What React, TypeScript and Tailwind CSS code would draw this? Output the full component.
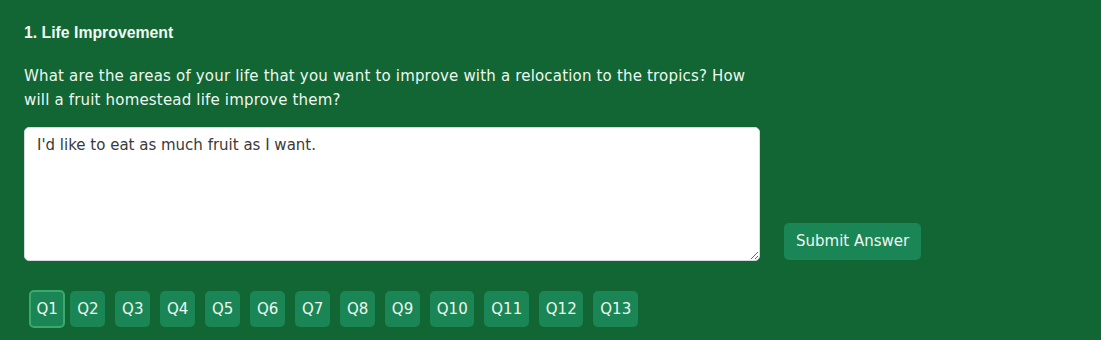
import React from "react";

const font = { fontFamily: '"DejaVu Sans", "Liberation Sans", sans-serif' };

const questions = ["Q1", "Q2", "Q3", "Q4", "Q5", "Q6", "Q7", "Q8", "Q9", "Q10", "Q11", "Q12", "Q13"];

export default function App() {
  return (
    <div
      className="h-[340px] w-full bg-[#116633] px-6 pt-[23px] text-[#f1f8f3]"
      style={font}
    >
      <h3
        className="text-[15.8px] font-bold leading-5"
        style={{ fontFamily: '"Liberation Sans", Arial, sans-serif' }}
      >
        1. Life Improvement
      </h3>
      <p className="mt-[21px] w-[728px] text-[15px] leading-6 tracking-[0.18px] text-[#eef7f1]">
        What are the areas of your life that you want to improve with a relocation to the tropics? How will a
        fruit homestead life improve them?
      </p>
      <div className="mt-[15px] flex items-end gap-6">
        <textarea
          className="h-[134px] w-[736px] resize-y rounded-[5px] border border-[#d5d9de] bg-white px-3 py-[7px] text-[15px] leading-5 text-[#3a3a3a] outline-none"
          style={font}
          defaultValue="I'd like to eat as much fruit as I want."
        />
        <button className="mb-px h-[37px] rounded-[5px] bg-[#1b8655] px-3 text-[15px] text-[#eef7f1]">
          Submit Answer
        </button>
      </div>
      <div className="mt-[29px] flex items-center">
        {questions.map((q, i) => (
          <button
            key={q}
            className={
              i === 0
                ? "ml-[5px] flex h-[38px] items-center rounded-[5px] border-2 border-[#3aa96b] bg-[#1b8655] px-[5.5px] text-[15px] text-[#eef7f1]"
                : i === 1
                  ? "ml-[5px] flex h-[36px] items-center rounded-[5px] bg-[#1b8655] px-[6.8px] text-[15px] text-[#eef7f1]"
                  : "ml-[10px] flex h-[36px] items-center rounded-[5px] bg-[#1b8655] px-[6.8px] text-[15px] text-[#eef7f1]"
            }
          >
            {q}
          </button>
        ))}
      </div>
    </div>
  );
}
